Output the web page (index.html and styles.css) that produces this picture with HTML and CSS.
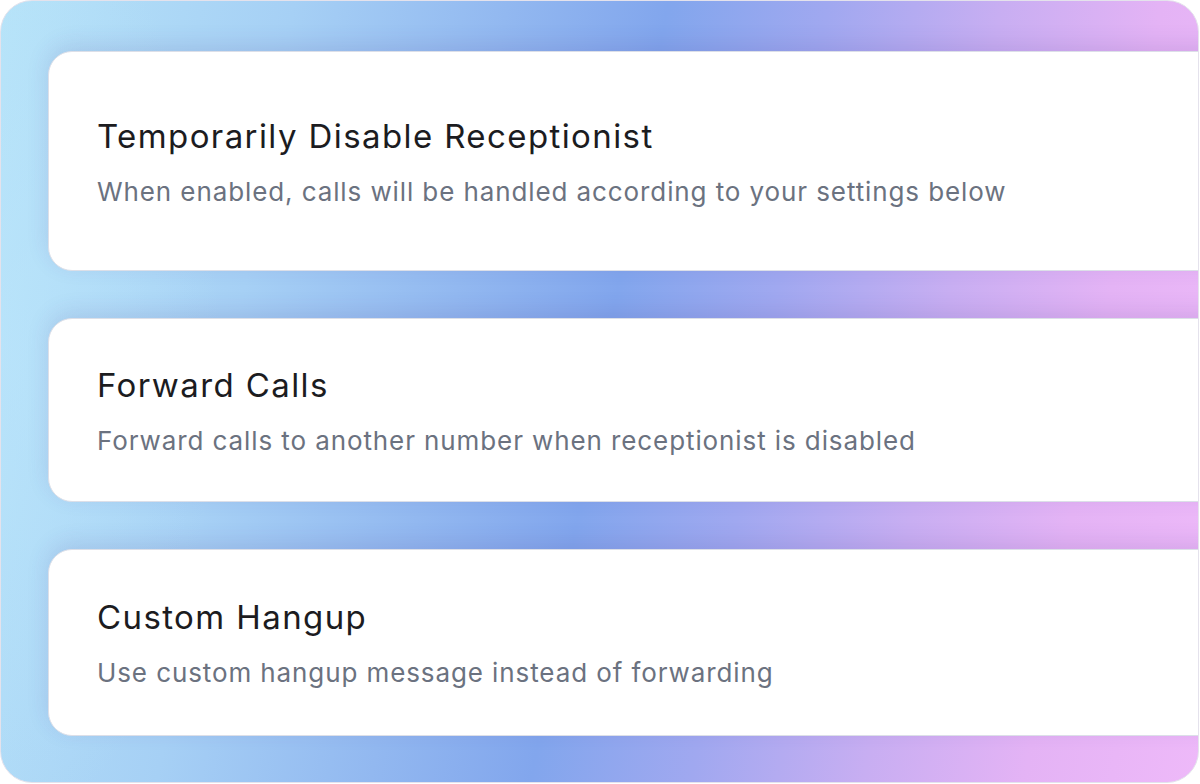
FILE: index.html
```html
<!DOCTYPE html>
<html lang="en">
<head>
<meta charset="utf-8">
<title>Receptionist settings</title>
<link rel="stylesheet" href="styles.css">
</head>
<body>
  <div class="frame">
    <div class="stack">
      <section class="card card-first">
        <h2 class="card-title">Temporarily Disable Receptionist</h2>
        <p class="card-desc">When enabled, calls will be handled according to your settings below</p>
      </section>
      <section class="card">
        <h2 class="card-title">Forward Calls</h2>
        <p class="card-desc">Forward calls to another number when receptionist is disabled</p>
      </section>
      <section class="card card-last">
        <h2 class="card-title">Custom Hangup</h2>
        <p class="card-desc">Use custom hangup message instead of forwarding</p>
      </section>
    </div>
  </div>
</body>
</html>
```

FILE: styles.css
```css
html, body {
  margin: 0;
  padding: 0;
  background: #ffffff;
}

body {
  font-family: Inter, "Noto Sans", "Liberation Sans", sans-serif;
  width: 1200px;
  height: 784px;
  overflow: hidden;
}

.frame {
  box-sizing: border-box;
  width: 1199px;
  height: 783px;
  border: 1px solid #e4e2ec;
  border-radius: 32px;
  overflow: hidden;
  padding: 50px 0 0 47px;
  background:
    radial-gradient(ellipse 220px 480px at 0% 45%, rgba(188, 230, 252, 0.6), rgba(188, 230, 252, 0) 100%),
    linear-gradient(100deg, #b6e3f8 0%, #a6d0f5 22%, #92b8f0 38%, #82a6ed 50%, #a0a8f0 62%, #c8aef2 75%, #e4b3f5 87%, #eeb9f9 100%);
}

.stack {
  display: flex;
  flex-direction: column;
  gap: 47px;
  width: 1200px;
}

.card {
  background: #ffffff;
  border: 1px solid #dcdfe8;
  border-radius: 24px;
  padding: 46px 48px 42px 48px;
  box-shadow: 0 -6px 22px rgba(70, 50, 140, 0.13);
}

.card-first {
  padding-top: 64px;
  padding-bottom: 60px;
}

.card-last {
  padding-top: 47px;
  padding-bottom: 44px;
}

.card-title {
  margin: 0;
  font-size: 33px;
  line-height: 40px;
  font-weight: 400;
  color: #1c1c1f;
  letter-spacing: 1.4px;
}

.card-desc {
  margin: 18px 0 0 0;
  font-size: 26px;
  line-height: 36px;
  font-weight: 400;
  color: #6b7280;
  letter-spacing: 0.9px;
}
```
